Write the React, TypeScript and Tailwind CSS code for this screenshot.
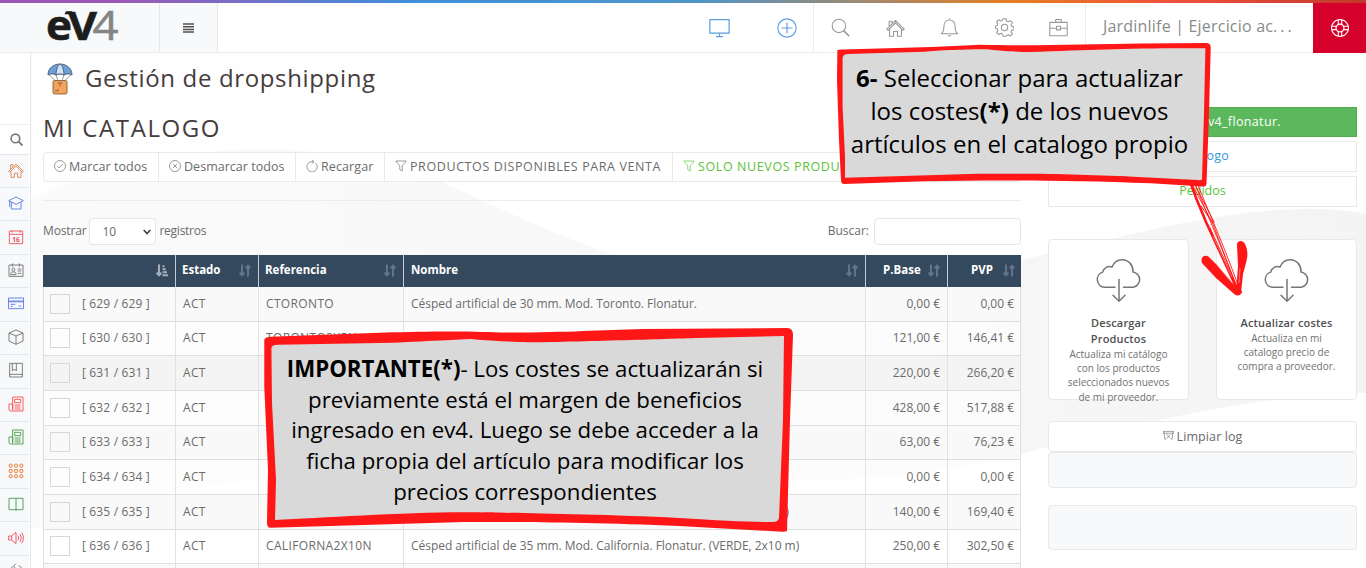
import type { ReactNode } from "react";
import { SlSupport } from "react-icons/sl";

type IconProps = { className?: string; children?: ReactNode };

function Icon({ className = "size-4", children }: IconProps) {
  return (
    <svg viewBox="0 0 24 24" className={`shrink-0 ${className}`} fill="none" stroke="currentColor" strokeWidth="1.35" strokeLinejoin="round">
      {children}
    </svg>
  );
}

const house = (
  <>
    <path d="M1 14 12 3l11 11-1.5 1.5L12 6 2.5 15.500z" />
    <path d="M4.500 14v9H9.500v-6h5v6h5v-9M4 10.500V4h3.500v3" />
  </>
);
const filter = <path d="M1.500 2h21l-8 9.500V22l-5-3v-7.500z" />;

const sideIcons: { color: string; art: ReactNode }[] = [
  { color: "text-[#e08050]", art: house },
  { color: "text-[#5a7be0]", art: <path d="M1 8.500 12 3l11 5.500-11 5.500zM5 10.500V21h14.500V10.500M2.500 9.500V18" /> },
  {
    color: "text-[#f0505a]",
    art: (
      <>
        <path d="M2 3h20v19H2zM2 8h20M6 1.500v4M18 1.500v4" />
        <text x="12" y="19" textAnchor="middle" fontSize="10" fontWeight="700" fill="currentColor" stroke="none" fontFamily="Open Sans, sans-serif">16</text>
      </>
    ),
  },
  { color: "text-[#6f6f6f]", art: <path d="M1.500 4.500h21v17h-21zM7 2v5M17 2v5M4 19c0-4 2-4 4-4s4 0 4 4zM5.800 11.500a2.200 2.400 0 1 0 4.400 0 2.200 2.400 0 1 0-4.400 0M14.500 10.500H20M14.500 13.500H20M14.500 17H20" /> },
  { color: "text-[#5578e6]", art: <path d="M.7 4.500h22.600v16H.7zM.7 9h22.600M.7 10.200h22.600M4 14h7M4 17h3M16 16.500h4" /> },
  { color: "text-[#6f6f6f]", art: <path d="M12 1.500 22.500 6v12L12 23 1.500 18V6zM1.500 6 12 10.500 22.500 6M12 10.500V23" /> },
  { color: "text-[#6f6f6f]", art: <path d="M2.500 2h19v20.500h-19zM2.500 18.500h19M6.500 2v11.500l3-3 3 3V2" /> },
  { color: "text-[#fa4a4a]", art: <path d="M7 1.500h15.500v21H4A2.500 2.500 0 0 1 1.500 20v-8H7v9M7 1.500V21M10 5h9v5h-9zM10 13.500h9M10 16.500h9M10 19.500h9" /> },
  { color: "text-[#459a45]", art: <path d="M7 1.500h15.500v21H4A2.500 2.500 0 0 1 1.500 20v-8H7v9M7 1.500V21M10 5h9v5h-9zM10 13.500h9M10 16.500h9M10 19.500h9" /> },
  {
    color: "text-[#ec8a4e]",
    art: (
      <>
        {[4, 12, 20].map((y) => [4, 12, 20].map((x) => <circle key={`${x}-${y}`} cx={x} cy={y} r="2.400" strokeWidth="1.600" />))}
      </>
    ),
  },
  { color: "text-[#459a45]", art: <path d="M1.500 3.500h21v17h-21zM12 3.500v18.500" /> },
  { color: "text-[#f04a5a]", art: <path d="M1 9h4.500L12 3.500v17L5.500 15H1zM5.500 9v6M14.500 8.500c2 2 2 5 0 7M17.500 6c3 3.500 3 8.500 0 12M20.500 4c3.500 5 3.500 11 0 16" /> },
  { color: "text-[#777777]", art: <path d="M2 14a10 10 0 0 1 6-9M12 9l-4-4 4-4M16 4a10 10 0 0 1 6 10M9 15l6-6" /> },
];

const rows = [
  { n: 629, ref: "CTORONTO", name: "Césped artificial de 30 mm. Mod. Toronto. Flonatur.", base: "0,00 €", pvp: "0,00 €" },
  { n: 630, ref: "TORONTO2X5N", name: "", base: "121,00 €", pvp: "146,41 €" },
  { n: 631, ref: "", name: "", base: "220,00 €", pvp: "266,20 €" },
  { n: 632, ref: "", name: "", base: "428,00 €", pvp: "517,88 €" },
  { n: 633, ref: "", name: "", base: "63,00 €", pvp: "76,23 €" },
  { n: 634, ref: "", name: "", base: "0,00 €", pvp: "0,00 €" },
  { n: 635, ref: "", name: "Césped artificial de 35 mm. Mod. California. Flonatur. (VERDE, 2x5 m)", base: "140,00 €", pvp: "169,40 €" },
  { n: 636, ref: "CALIFORNA2X10N", name: "Césped artificial de 35 mm. Mod. California. Flonatur. (VERDE, 2x10 m)", base: "250,00 €", pvp: "302,50 €" },
  { n: 637, ref: "", name: "", base: "", pvp: "" },
];

const cols = "grid grid-cols-[131px_83px_145px_462px_82px_75px]";

function SortMark({ active = false }: { active?: boolean }) {
  return (
    <svg viewBox="0 0 12 13" className={`ml-auto h-[13px] w-3 shrink-0 ${active ? "text-[#a3aeb9]" : "text-[#63748a]"}`} fill="none" stroke="currentColor" strokeWidth="2.1">
      <path d="M3 0.500v11M.6 8.800 3 11.200l2.400-2.400" />
      {active ? <path d="M6.500 11.300h5.500M6.500 8.300h4.500M6.500 5.300h3.300M6.500 2.300h2" /> : <path d="M9 12.500v-11M6.600 4.200 9 1.800l2.400 2.400" />}
    </svg>
  );
}

function HeadCell({ label, pad = "pl-[6px]", active }: { label: string; pad?: string; active?: boolean }) {
  return (
    <div className={`flex items-center border-l border-[#c3cad2] pr-[7px] pb-0.5 first:border-l-0 ${pad}`}>
      <span className="text-[11.5px] font-bold text-white">{label}</span>
      <SortMark active={active} />
    </div>
  );
}

function CloudDownload() {
  return (
    <svg viewBox="0 0 46 43" className="h-[43px] w-[46px] shrink-0" fill="none" stroke="#747779" strokeWidth="1.500" strokeLinecap="round" strokeLinejoin="round">
      <path d="M19 28.300H8.500a7.800 7.800 0 0 1-1.800-15.200c1-4.500 5.300-6.500 9.300-5 1.800-4.600 5.500-7.300 10-7.300 6.500 0 11 5 11 11.500v.8a7.700 7.700 0 0 1 .3 15.200H27.500" />
      <path d="M23 20.500V42M17 36.300l6 6 6-6" />
    </svg>
  );
}

function Card({ title, lines }: { title: string[]; lines: string[] }) {
  return (
    <div className="flex h-[161px] w-[141px] flex-col items-center rounded-sm border border-[#e8e8e8] bg-white pt-[19px] text-center whitespace-nowrap">
      <CloudDownload />
      <div className="mt-[13px] text-[11px] leading-4 font-semibold tracking-[0.150px] text-[#505050]">
        {title.map((t) => <div key={t}>{t}</div>)}
      </div>
      <div className="text-[10px] leading-[14.2px] text-[#707070]">
        {lines.map((t) => <div key={t}>{t}</div>)}
      </div>
    </div>
  );
}

function ToolButton({ className, icon, children }: { className: string; icon: ReactNode; children: ReactNode }) {
  return (
    <div className={`flex items-center gap-[3px] border-r border-[#e9e9e9] pl-[10px] whitespace-nowrap ${className}`}>
      <Icon className="-mt-[3px] size-[12px]">{icon}</Icon>
      <span>{children}</span>
    </div>
  );
}

function TopBar() {
  const tools: ReactNode[] = [
    <><circle cx="10" cy="10" r="8.500" /><path d="m16 16 7 7" strokeWidth="2" /></>,
    house,
    <path d="M1.500 20c3-2 3.500-4 3.500-9.500C5 5.500 8 2.500 12 2.500s7 3 7 8c0 5.500.5 7.500 3.500 9.500zM10 22.500h4M11.500 1h1" />,
    <><circle cx="12" cy="12" r="4" /><path d="M10 1h4l.6 3 2 .9 2.700-1.700 2.700 2.700-1.700 2.700.9 2 2.800.6v3.600l-2.800.7-.9 2 1.700 2.600-2.700 2.700-2.700-1.700-2 .9L14 23h-4l-.6-2.900-2-.9-2.700 1.700L2 18.200l1.700-2.600-.9-2L0.600 13v-2.800l2.200-.8.9-2L2 4.900 4.700 2.200l2.700 1.700 2-.9z" /></>,
    <path d="M1 5.500h22v17H1zM8.500 5.500V2h7v3.500M1 13h8M15 13h8M9.500 10.500h5v4.500h-5z" />,
  ];
  return (
    <header className="flex h-[50px] border-b border-[#ececec] bg-white">
      <div className="w-40 border-r border-[#e6e8eb] bg-[#f8f9fb] pl-[46px]">
        <svg viewBox="0 0 74 40" className="h-10 w-[74px]" fontFamily="Open Sans, sans-serif">
          <text x="0" y="37" fontSize="41" fontWeight="700" fill="#1d1d1b" stroke="#1d1d1b" strokeWidth=".6" textLength="26" lengthAdjust="spacingAndGlyphs">e</text>
          <text x="22" y="37" fontSize="40" fontWeight="700" fill="#1d1d1b" stroke="#1d1d1b" strokeWidth=".6" textLength="29" lengthAdjust="spacingAndGlyphs">V</text>
          <path d="M20 8.300h6l1 3H18.500z" fill="#1d1d1b" />
          <text x="46.500" y="37" fontSize="40" fontWeight="400" fill="#858585" stroke="#858585" strokeWidth=".6" textLength="26" lengthAdjust="spacingAndGlyphs">4</text>
        </svg>
      </div>
      <div className="flex w-[58px] items-center justify-center border-r border-[#e6e8eb] bg-[#f8f9fb]">
        <svg viewBox="0 0 11 10" className="h-[10px] w-[11px]" stroke="#505050" strokeWidth="1.500"><path d="M0 1h11M0 3.700h11M0 6.400h11M0 9.100h11" /></svg>
      </div>
      <div className="flex flex-1 items-center justify-end">
        <div className="flex w-[135px] items-center pr-[16px] pl-[31px] text-[#5b9de0]">
          <Icon className="mr-auto size-[21px]"><path d="M1 3h22v15.500H1zM12 18.500V22M8 22.500h8" /></Icon>
          <Icon className="size-5"><circle cx="12" cy="12" r="11" /><path d="M12 5.500v13M5.500 12h13" /></Icon>
        </div>
      </div>
      <div className="flex w-[273px] items-center justify-between border-x border-[#ececec] px-[17px] text-[#999]">
        {tools.map((t, i) => <Icon key={i} className="size-[19px]">{t}</Icon>)}
      </div>
      <div className="flex w-[227px] items-center pb-[3px] pl-[17px] text-base tracking-[0.200px] whitespace-nowrap text-[#8a8a8a]">Jardinlife | Ejercicio ac<span className="tracking-[3px]">...</span></div>
      <div className="-mb-px flex w-[53px] items-center justify-center bg-[#d6002c] text-white"><SlSupport className="size-[18px]" /></div>
    </header>
  );
}

function Sidebar() {
  return (
    <aside className="w-[31px] shrink-0 border-r border-[#e2e4e7] bg-white pr-px">
      <div className="h-[72px] border-b border-[#e9ebee]" />
      <div className="flex h-[29.500px] items-center border-b border-[#e4e6e9] pl-[10px] text-[#777]">
        <Icon className="size-[13px]"><circle cx="10" cy="10" r="8" strokeWidth="3" /><path d="m16 16 7 7" strokeWidth="3.500" /></Icon>
      </div>
      {sideIcons.map((s, i) => (
        <div key={i} className={`flex h-[33.450px] items-center border-b border-[#e4e6e9] bg-[#f8f9fb] pl-[8px] ${s.color}`}>
          <Icon className="-mt-0.5 size-4">{s.art}</Icon>
        </div>
      ))}
    </aside>
  );
}

function Parachute() {
  return (
    <svg viewBox="0 0 26 32" className="h-8 w-[26px]" stroke="#3d4a66" strokeWidth=".8" strokeLinejoin="round">
      <path d="M2 12 9 18M24 12l-7 6M9 12l2 6M17 12l-2 6" fill="none" stroke="#8a8a8a" />
      <path d="M1 12C1 5 6.500 1 13 1s12 4 12 11c-2-1.500-6-1.500-8 0-2-1.500-6-1.500-8 0-2-1.500-6-1.500-8 0z" fill="#6f9fd8" />
      <path d="M9 12c0-6 2-10 4-11 2 1 4 5 4 11-2-1.500-6-1.500-8 0z" fill="#cfe3f5" />
      <rect x="6" y="17.500" width="14" height="13.500" rx="1.500" fill="#f2a45c" stroke="#7a5238" />
      <path d="M10.500 20h5M13 20v3.500M8 28h3v-2" fill="none" stroke="#7a5238" />
    </svg>
  );
}

export default function App() {
  return (
    <div className="relative flex h-[568px] w-[1366px] flex-col overflow-hidden bg-white font-['Open_Sans',sans-serif] text-[#6b6b6b]">
      <div className="h-[3px] shrink-0 bg-[linear-gradient(90deg,#9b59b6_0%,#9b59b6_9%,#3f8fdc_30%,#4f95c8_51%,#e67e22_74%,#f0503c_86%,#c0392b_100%)]" />
      <TopBar />
      <div className="relative flex min-h-0 flex-1">
        <Sidebar />
        <main className="relative flex min-w-0 flex-1 pl-3">
          <svg viewBox="31 53 1335 515" className="absolute inset-0 h-[515px] w-[1335px]">
            <defs>
              <linearGradient id="wave" x1="0" x2="1">
                <stop offset="0" stopColor="#fafafa" />
                <stop offset=".5" stopColor="#f8f8f8" />
                <stop offset="1" stopColor="#f4f4f4" />
              </linearGradient>
            </defs>
            <path d="M31 200C150 145 350 110 440 100 560 85 700 75 840 53H31z" fill="#fefefe" />
            <path d="M31 200C100 167 190 145 290 150 350 153 400 163 440 181 500 209 550 232 600 250 750 295 900 290 1021 260 1130 235 1220 209 1310 209 1335 209 1352 211 1366 214V393C1270 393 1150 420 1040 449 960 470 890 480 790 481 500 480 300 440 31 530z" fill="url(#wave)" />
          </svg>
          <section className="relative w-[978px] shrink-0">
            <div className="flex h-[51px] items-center gap-[12px] pl-1 text-2xl tracking-[0.650px] text-[#453c3c]">
              <Parachute />
              <h1 className="-mt-px">Gestión de dropshipping</h1>
            </div>
            <h2 className="mt-[7px] h-9 text-2xl leading-[34px] tracking-[1.600px] text-[#453c3c]">MI CATALOGO</h2>
            <div className="mt-[5px] flex h-[30px] rounded-sm border border-[#e9e9e9] bg-white text-[12.500px] text-[#6b6b6b]">
              <ToolButton className="w-[115px]" icon={<><circle cx="12" cy="12" r="11" /><path d="m6.500 12 4 4 7.500-8" /></>}><span className="tracking-[0.05px]">Marcar todos</span></ToolButton>
              <ToolButton className="w-[137px]" icon={<><circle cx="12" cy="12" r="11" /><path d="m7.500 7.500 9 9m0-9-9 9" /></>}><span className="tracking-[0.030px]">Desmarcar todos</span></ToolButton>
              <ToolButton className="w-[89px]" icon={<path d="M18.500 5.500A10.300 10.300 0 1 1 10 3.500h5M11-1l5 4.500-5 4.500" />}><span className="tracking-[0.100px]">Recargar</span></ToolButton>
              <ToolButton className="w-[288px]" icon={filter}><span className="tracking-[0.600px]">PRODUCTOS DISPONIBLES PARA VENTA</span></ToolButton>
              <ToolButton className="flex-1 text-[#5bc236]" icon={filter}><span className="tracking-[0.600px]">SOLO NUEVOS PRODUCTOS</span></ToolButton>
            </div>
            <div className="mt-[18px] border-t border-[#ececec]" />
            <div className="mt-[17px] flex h-[27px] items-center text-[12px]">
              <span className="-mt-0.5 tracking-[-0.150px]">Mostrar</span>
              <div className="ml-[3px] flex h-[27px] w-[67px] items-center justify-between rounded-sm border border-[#e6e6e6] bg-white pr-[4px] pl-[12px]">
                10
                <svg viewBox="0 0 8 6" className="h-1.5 w-2" fill="none" stroke="#444" strokeWidth="1.700"><path d="m.7 1 3.300 3.500L7.300 1" /></svg>
              </div>
              <span className="-mt-0.5 ml-[3px] tracking-[-0.250px]">registros</span>
              <span className="-mt-0.5 ml-auto">Buscar:</span>
              <div className="ml-[5px] h-[27px] w-[147px] rounded-sm border border-[#e6e6e6] bg-white" />
            </div>
            <div className="mt-[10px] border-x border-[#dcdee0]">
              <div className={`${cols} -mx-px h-8 border-x border-[#34495e] bg-[#34495e]`}>
                <HeadCell label="" active />
                <HeadCell label="Estado" />
                <HeadCell label="Referencia" />
                <HeadCell label="Nombre" pad="pl-[7px]" />
                <HeadCell label="P.Base" pad="pl-[17px]" />
                <HeadCell label="PVP" pad="pl-[23px]" />
              </div>
              {rows.map((r, i) => (
                <div key={r.n} className={`${cols} h-[34.660px] border-b border-[#dfdfdf] text-[12px] tracking-[-0.020px] whitespace-nowrap [&>div]:flex [&>div]:items-center [&>div]:border-l [&>div]:border-[#e2e2e2] [&>div]:px-[7px] ${i === 2 ? "bg-[#f4f4f4]" : i % 2 === 0 ? "bg-[#f9f9f9]" : "bg-white/60"}`}>
                  <div className="!border-l-0">
                    <div className="-ml-px size-5 border border-[#d8d8d2]" />
                    <span className="ml-3 tracking-[0.150px]">[ {r.n} / {r.n} ]</span>
                  </div>
                  <div className="tracking-[0.300px]">ACT</div>
                  <div className="tracking-[0.350px]">{r.ref}</div>
                  <div className={i === 6 ? "tracking-[-0.080px]" : "tracking-[-0.030px]"}>{r.name}</div>
                  <div className="justify-end">{r.base}</div>
                  <div className="justify-end !pr-2">{r.pvp}</div>
                </div>
              ))}
            </div>
          </section>
          <section className="relative ml-[27px] w-[309px] shrink-0 pt-[54px] text-[12.500px]">
            <div className="flex h-[30px] items-center justify-end border border-[#52ab52] bg-[#5cb85c] pr-[75px] tracking-[0.350px] text-white">ev4_flonatur.</div>
            <div className="mt-1 flex h-[31px] items-center justify-center border border-[#e9e9e9] bg-white tracking-[0.250px] text-[#3498db]">Catálogo</div>
            <div className="mt-1 flex h-[31px] items-center justify-center border border-[#e9e9e9] bg-white text-[#5bc236]">Pedidos</div>
            <div className="mt-8 flex justify-between">
              <Card title={["Descargar", "Productos"]} lines={["Actualiza mi catálogo", "con los productos", "seleccionados nuevos", "de mi proveedor."]} />
              <Card title={["Actualizar costes"]} lines={["Actualiza en mi", "catalogo precio de", "compra a proveedor."]} />
            </div>
            <div className="mt-[21px] flex h-[31px] items-center justify-center gap-[3px] rounded-sm border border-[#e9e9e9] bg-white pt-px">
              <Icon className="-mt-[3px] size-[11px]"><path d="M0 3h24M2 3l2 17h3M22 3l-2 17h-3M0 7h24M8 9.500l8 9m0-9-8 9" /></Icon>
              <span className="tracking-[0.100px]">Limpiar log</span>
            </div>
            <div className="h-9 rounded-sm border border-[#e9e9e9] bg-[#f8f9fb]" />
            <div className="mt-[17px] h-[45px] rounded-sm border border-[#e9e9e9] bg-[#f8f9fb]" />
          </section>
        </main>
      </div>

      <svg viewBox="0 0 1366 568" className="absolute inset-0 h-[568px] w-[1366px]">
        <g fill="none" stroke="#ff1616" strokeLinecap="round" strokeLinejoin="round">
          <path d="M1191 184C1199 207 1203 214 1206 222L1238 291" strokeWidth="2.600" />
          <path d="M1195 184C1206 212 1217 235 1238 290M1198 185C1208 211 1222 240 1239 288M1193 186 1213 224 1237 288" strokeWidth=".9" />
          <path d="M1195 185 1214 222M1201 206 1213 223M1210 228 1239 292" strokeWidth="1" />
        </g>
        <g fill="#ff1616">
          <path d="M1202 263C1200 257 1205 254 1209 257L1216 264 1236 287 1242 291C1242 296 1236 297 1233 293L1216 278Z" />
          <path d="M1237 245C1237 240 1243 240 1245 244 1248 250 1248 256 1246 263L1243 274 1241 293H1236L1238 266Z" />
          <path d="M837.400 50Q838 49.500 843 49.500C890 48 940 47 980 44.700 1023 46 1090 44.500 1140 43.500L1206 43Q1211 43 1210.700 48L1209 113 1206.500 184Q1206 187 1203 186.500L1151 183.300C1064 180 994 180 924 181.300L844 184Q841 184 841 180L839 140 837 80Z" />
          <path d="M264.300 340Q264.500 337 271 336.700L393 332.300C464 330.500 480 332 507 332.500 571 332.500 600 330 643 329L787 328Q793 328 793 335L790 420 787 531Q785 532 782 531.700L679 526C571 521.500 464 522 464 522L271 527.700Q267 528 267 523L268 470 264.300 387Z" />
        </g>
        <g stroke="#f9a0a0" strokeWidth=".7"><path d="m1213 236 19 41M1217 265l15 18M1240 268l-1 15" /></g>
        <g fill="#d9d9d9">
          <path d="M842.600 58Q843 54 848 54L924 51.700C960 49 987 49.300 987 49.300 1010 52 1029 52 1029 52 1098 50 1120 48 1205.400 48.300L1204 113 1202 179Q1201 181 1198 180L1133 176.700C1064 173 977 173.700 977 173.700L845 177.700V157L842.600 107Z" />
          <path d="M271.400 348Q272 344.700 278 344.700L393 342.700C430 341 471 339 471 339 500 342 536 342.300 536 342.300 607 341 696 338 696 338L784 336 783 420 779 518Q778 522 773 522 742 522 679 518C571 513 464 512.300 464 512.300 400 512.500 320 518 275 520L276 480 272 403Z" />
        </g>
      </svg>
      <p className="absolute top-[61px] left-[839px] w-[361px] text-center text-2xl leading-[33px] whitespace-nowrap text-black">
        <b>6-</b> Seleccionar para actualizar<br />los costes<b>(*)</b> de los nuevos<br />artículos en el catalogo propio
      </p>
      <p className="absolute top-[354px] left-[275px] w-[500px] text-center text-[22.250px] leading-[30.700px] whitespace-nowrap text-black">
        <b>IMPORTANTE(*)</b>- Los costes se actualizarán si<br />previamente está el margen de beneficios<br />ingresado en ev4. Luego se debe acceder a la<br />ficha propia del artículo para modificar los<br />precios correspondientes
      </p>
    </div>
  );
}
